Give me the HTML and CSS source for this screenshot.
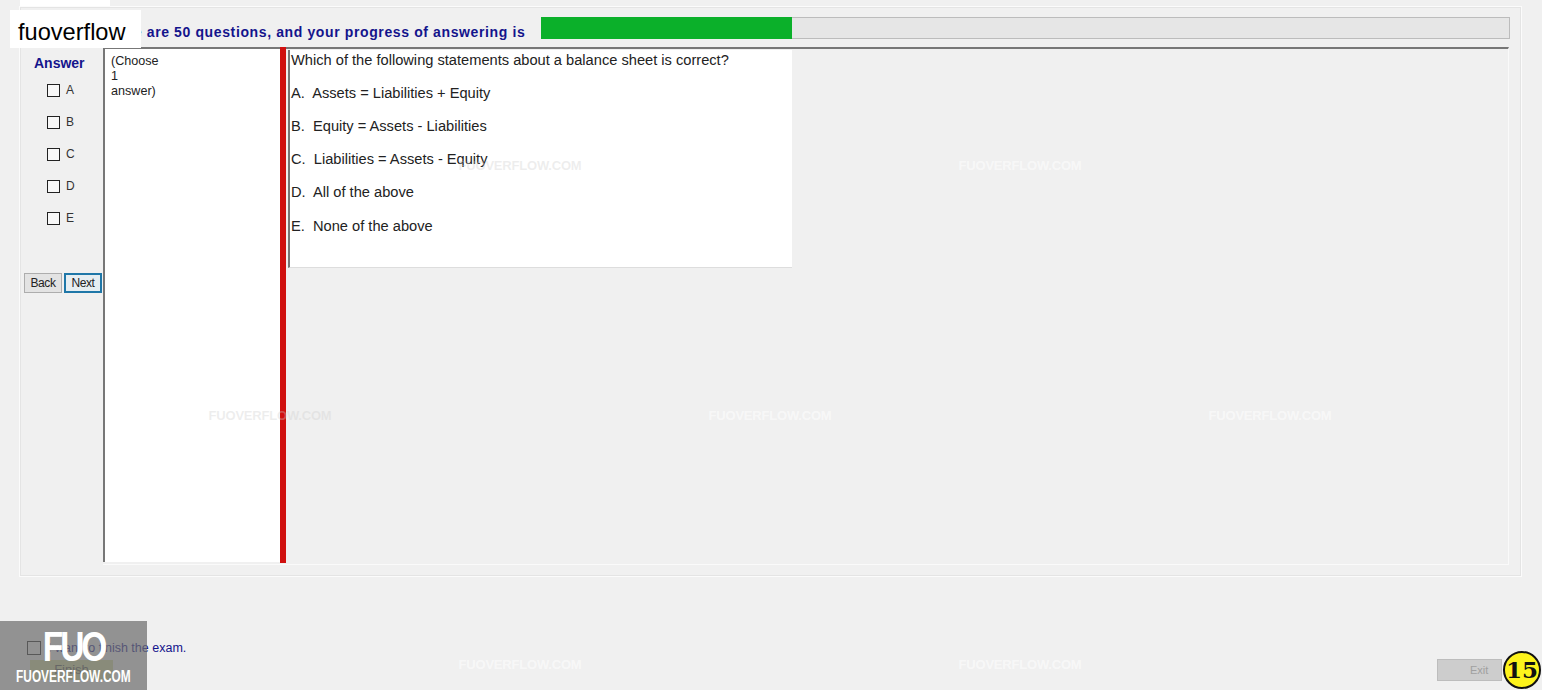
FILE: index.html
```html
<!DOCTYPE html>
<html>
<head>
<meta charset="UTF-8">
<title>Exam</title>
<link rel="stylesheet" href="styles.css">
</head>
<body>
<div class="window">
	<div class="tab"></div>
	<div class="panel">
		<div class="toprow">
			<div class="progresstext">There are 50 questions, and your progress of answering is</div>
			<div class="progress"><div class="progress_bar"></div></div>
		</div>
		<div class="content">
			<div class="answers">
				<div class="answers_title">Answer</div>
				<div class="options">
					<label class="option"><span class="check"></span>A</label>
					<label class="option"><span class="check"></span>B</label>
					<label class="option"><span class="check"></span>C</label>
					<label class="option"><span class="check"></span>D</label>
					<label class="option"><span class="check"></span>E</label>
				</div>
				<div class="navbuttons">
					<div class="btn">Back</div>
					<div class="btn btn_focus">Next</div>
				</div>
			</div>
			<div class="main">
				<div class="hint">(Choose<br>1<br>answer)</div>
				<div class="splitter"></div>
				<div class="question">
					<p class="question_title">Which of the following statements about a balance sheet is correct?</p>
					<p class="line">A.&nbsp; Assets = Liabilities + Equity</p>
					<p class="line">B.&nbsp; Equity = Assets - Liabilities</p>
					<p class="line">C.&nbsp; Liabilities = Assets - Equity</p>
					<p class="line">D.&nbsp; All of the above</p>
					<p class="line line_last">E.&nbsp; None of the above</p>
				</div>
			</div>
		</div>
	</div>
	<div class="footer">
		<div class="finish">
			<label class="finish_label"><span class="check check_big"></span>I want to finish the exam.</label>
			<div class="finish_btn">Finish</div>
		</div>
		<div class="exit_btn">Exit</div>
	</div>
</div>

<div class="wm wm_onwhite wm1">FUOVERFLOW.COM</div>
<div class="wm wm2">FUOVERFLOW.COM</div>
<div class="wm wm_onwhite wm3">FUOVERFLOW.COM</div>
<div class="wm wm4">FUOVERFLOW.COM</div>
<div class="wm wm5">FUOVERFLOW.COM</div>
<div class="wm wm6">FUOVERFLOW.COM</div>
<div class="wm wm7">FUOVERFLOW.COM</div>

<div class="brand">fuoverflow</div>
<div class="logo">
	<div class="logo_big">FUO</div>
	<div class="logo_small">FUOVERFLOW.COM</div>
</div>
<div class="page_no">15</div>
</body>
</html>
```

FILE: styles.css
```css
html,body{
	margin: 0;
	height: 690px;
	overflow: hidden;
	background: #f0f0f0;
	font-family: "Liberation Sans", Arial, sans-serif;
}
.window{
	width: 1542px;
	height: 690px;
	padding-left: 19px;
	box-sizing: border-box;
}
.tab{
	width: 90px;
	height: 6px;
	margin-left: 1px;
	background: #fff;
}
.panel{
	width: 1503px;
	height: 571px;
	box-sizing: border-box;
	border: solid 1px #fbfbfb;
	box-shadow: inset 0 0 0 1px #e4e4e4;
	padding: 10px 12px 0 3px;
}
.toprow{
	display: flex;
	height: 22px;
	padding-left: 78px;
}
.progresstext{
	flex: none;
	width: 440px;
	font-size: 14px;
	font-weight: bold;
	letter-spacing: 0.62px;
	color: #14148c;
	line-height: 30px;
	white-space: nowrap;
}
.progress{
	flex: none;
	width: 969px;
	height: 22px;
	box-sizing: border-box;
	background: #e6e6e6;
	border: solid 1px #bcbcbc;
	border-left: 0;
}
.progress_bar{
	width: 251px;
	height: 22px;
	margin-top: -1px;
	background: #0bb02a;
}
.content{
	display: flex;
	margin-top: 8px;
	height: 516px;
}
.answers{
	width: 80px;
	flex: none;
}
.answers_title{
	margin-top: 8px;
	padding-left: 11px;
	font-size: 14px;
	font-weight: bold;
	color: #14148c;
	line-height: 16px;
}
.options{
	margin-top: 13px;
	padding-left: 24px;
}
.option{
	display: flex;
	height: 32px;
	font-size: 12px;
	color: #333;
	line-height: 12px;
}
.check{
	display: block;
	width: 13px;
	height: 13px;
	box-sizing: border-box;
	margin: 0 6px 0 0;
	background: #f8f8f8;
	border: solid 1px #222;
}
.navbuttons{
	display: flex;
	gap: 2px;
	margin-top: 29px;
	padding-left: 1px;
}
.btn{
	flex: none;
	width: 38px;
	height: 20px;
	box-sizing: border-box;
	background: #e3e3e3;
	border: solid 1px #adadad;
	font-size: 12px;
	letter-spacing: -0.4px;
	line-height: 19px;
	text-align: center;
	color: #222;
}
.btn_focus{
	border: solid 2px #1f77a8;
	line-height: 17px;
	background: #e6eef2;
}
.main{
	flex: 1;
	display: flex;
	align-items: flex-start;
	height: 515px;
	border-top: solid 2px #777;
	border-bottom: solid 1px #fafafa;
	border-right: solid 1px #fafafa;
}
.hint{
	width: 169px;
	height: 508px;
	padding-left: 6px;
	padding-top: 5px;
	flex: none;
	background: #fff;
	border-left: solid 2px #777;
	font-size: 12.6px;
	line-height: 15px;
	color: #222;
}
.splitter{
	width: 6px;
	height: 516px;
	margin-top: -2px;
	flex: none;
	background: #d0100f;
}
.question{
	width: 502px;
	height: 217px;
	margin: 1px 0 0 2px;
	background: #fff;
	border-left: solid 2px #777;
	border-bottom: solid 1px #ddd;
	font-size: 14.65px;
	color: #222;
}
.question p{
	margin: 0;
	padding-left: 1px;
	height: 33px;
	line-height: 20px;
	white-space: nowrap;
}
.question p.line_last{
	padding-top: 1px;
}
.footer{
	display: flex;
	justify-content: space-between;
	align-items: flex-end;
	width: 1483px;
	height: 104px;
	padding-left: 8px;
	box-sizing: border-box;
}
.finish{
	margin-bottom: 1px;
}
.finish_label{
	display: flex;
	align-items: center;
	height: 16px;
	font-size: 12.5px;
	color: #14148c;
}
.check_big{
	width: 14px;
	height: 14px;
	margin: 0 7px 0 0;
	background: none;
}
.finish_btn{
	width: 83px;
	height: 20px;
	margin: 4px 0 0 3px;
	background: #cfd79a;
	font-size: 13px;
	line-height: 20px;
	text-align: center;
	color: #555;
}
.exit_btn{
	width: 65px;
	height: 22px;
	box-sizing: border-box;
	padding-left: 32px;
	background: #cdcdcd;
	border: solid 1px #bdbdbd;
	font-size: 11px;
	line-height: 20px;
	color: #a0a0a0;
}

/* overlays */
.wm{
	position: absolute;
	width: 130px;
	font-size: 13px;
	font-weight: bold;
	text-align: center;
	white-space: nowrap;
	letter-spacing: -0.2px;
	color: rgba(255,255,255,0.55);
}
.wm_onwhite{
	color: rgba(205,205,205,0.35);
}
.wm1{left: 455px; top: 158px;}
.wm2{left: 955px; top: 158px;}
.wm3{left: 205px; top: 408px;}
.wm4{left: 705px; top: 408px;}
.wm5{left: 1205px; top: 408px;}
.wm6{left: 455px; top: 657px;}
.wm7{left: 955px; top: 657px;}
.brand{
	position: absolute;
	left: 10px;
	top: 10px;
	width: 131px;
	height: 38px;
	padding-left: 8px;
	box-sizing: border-box;
	background: #fff;
	font-size: 23.6px;
	line-height: 44px;
	color: #000;
}
.logo{
	position: absolute;
	left: 0;
	top: 621px;
	width: 147px;
	height: 69px;
	background: rgba(110,110,110,0.72);
	color: #fff;
	text-align: center;
}
.logo_big{
	font-size: 43px;
	font-weight: bold;
	letter-spacing: -4px;
	line-height: 50px;
	height: 47px;
	transform: scaleX(0.78);
}
.logo_small{
	font-size: 16px;
	font-weight: bold;
	line-height: 18px;
	transform: translateX(-3px) scaleX(0.74);
	white-space: nowrap;
}
.page_no{
	position: absolute;
	left: 1503px;
	top: 651px;
	width: 38px;
	height: 38px;
	box-sizing: border-box;
	border: solid 2px #111;
	border-radius: 50%;
	background: #fdf31c;
	font-family: "DejaVu Serif", serif;
	font-size: 23px;
	font-weight: bold;
	line-height: 34px;
	text-align: center;
	color: #111;
}
```
